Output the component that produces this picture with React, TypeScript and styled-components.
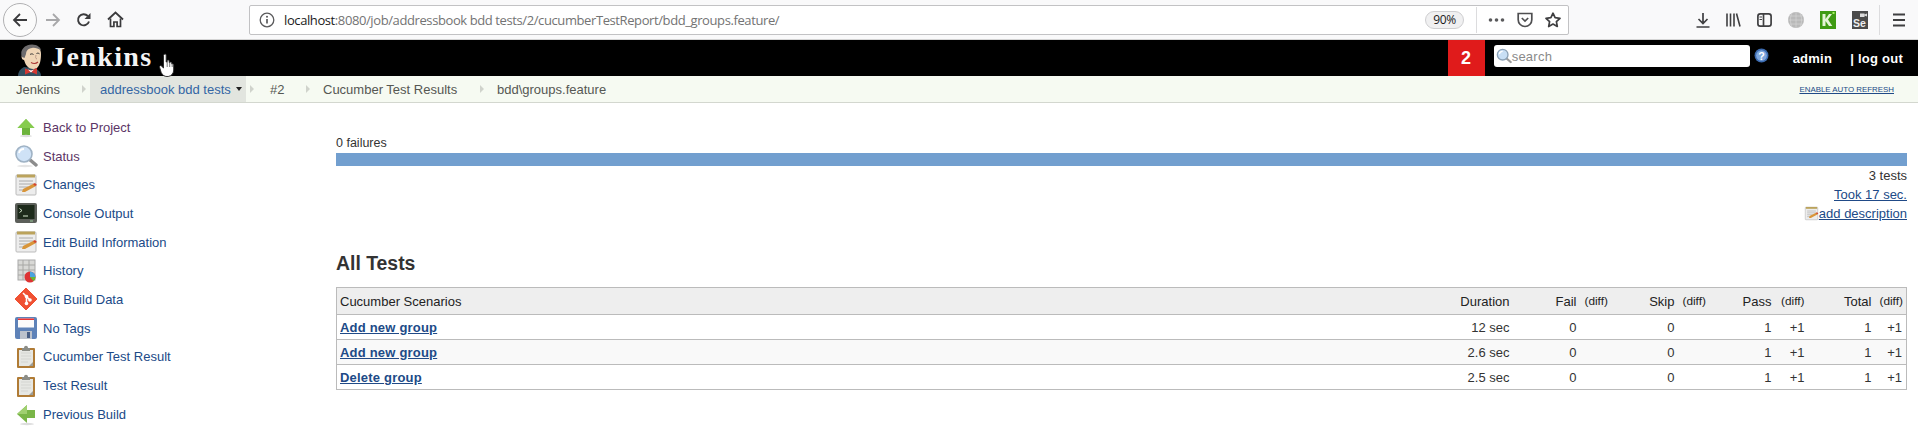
import React from "react";
import styled, { createGlobalStyle } from "styled-components";

const linkBlue = "#204a87";
const visited = "#5c3566";

const GlobalStyle = createGlobalStyle`
    html, body {
        margin: 0;
        padding: 0;
        height: 441px;
        overflow: hidden;
        background: #fff;
        font-family: "Liberation Sans", Arial, sans-serif;
        font-size: 13px;
        color: #333;
    }
    * {
        box-sizing: border-box;
    }
`;

const Page = styled.div`
    position: relative;
    width: 1918px;
    height: 441px;
    overflow: hidden;
`;

/* browser chrome */
const Toolbar = styled.div`
    display: flex;
    align-items: center;
    height: 40px;
    padding-left: 3px;
    background: #f9f9fa;
    border-bottom: 1px solid #d4d4d4;
`;

const BackButton = styled.div`
    display: flex;
    align-items: center;
    justify-content: center;
    flex: none;
    width: 34px;
    height: 34px;
    border: 1px solid #b1b1b3;
    border-radius: 50%;
    background: #fbfbfb;
`;

const NavIcons = styled.div`
    display: flex;
    align-items: center;
    flex: none;
    gap: 15px;
    margin-left: 8px;
    margin-right: 125px;
`;

const UrlBar = styled.div`
    display: flex;
    align-items: center;
    flex: none;
    width: 1320px;
    height: 30px;
    padding: 0 7px 0 9px;
    background: #fff;
    border: 1px solid #c2c2c4;
    border-radius: 2px;
`;

const UrlText = styled.div`
    flex: 1;
    margin-left: 9px;
    font-family: "Open Sans", sans-serif;
    font-size: 13px;
    letter-spacing: -0.4px;
    color: #737373;
    white-space: nowrap;
`;

const UrlHost = styled.span`
    color: #1a1a1a;
`;

const ZoomPill = styled.div`
    width: 39px;
    height: 18px;
    border: 1px solid #cfcfd1;
    border-radius: 9px;
    background: #f0f0f1;
    font-family: "Open Sans", sans-serif;
    font-size: 12px;
    letter-spacing: -0.4px;
    line-height: 16px;
    text-align: center;
    color: #1a1a1a;
`;

const UrlDivider = styled.div`
    width: 1px;
    height: 26px;
    margin: 0 11px 0 12px;
    background: #dcdcde;
`;

const UrlActions = styled.div`
    display: flex;
    align-items: center;
    gap: 12px;
`;

const ToolIcons = styled.div`
    display: flex;
    align-items: center;
    gap: 16px;
    margin-left: 127px;
`;

const ToolDivider = styled.div`
    width: 1px;
    height: 30px;
    margin: 0 13px 0 11px;
    background: #dcdcde;
`;

/* jenkins header */
const Header = styled.div`
    display: flex;
    align-items: stretch;
    height: 36px;
    background: #000;
    color: #fff;
`;

const LogoArea = styled.div`
    display: flex;
    flex: 1;
    align-items: flex-end;
    padding-left: 17px;
`;

const LogoText = styled.div`
    align-self: center;
    margin: -3px 0 0 4px;
    font-family: "Liberation Serif", serif;
    font-size: 28px;
    font-weight: bold;
    letter-spacing: 1.4px;
    color: #f4f4f4;
`;

const Cursor = styled.svg`
    position: absolute;
    left: 159px;
    top: 53px;
`;

const BuildBadge = styled.div`
    display: flex;
    align-items: center;
    justify-content: center;
    width: 37px;
    background: #e01b1b;
    font-size: 18px;
    font-weight: bold;
`;

const SearchBox = styled.div`
    display: flex;
    align-items: center;
    width: 256px;
    height: 22px;
    margin: 5px 4px 0 9px;
    padding-left: 2px;
    background: #fff;
    border-radius: 3px;
    font-size: 13px;
    letter-spacing: 0.25px;
    color: #8a8a8a;
`;

const HelpIcon = styled.svg`
    margin-top: 8px;
`;

const UserLink = styled.div<{ $gap: number }>`
    margin: 11px 0 0 ${(props) => props.$gap}px;
    font-size: 13px;
    font-weight: bold;
    letter-spacing: 0.25px;
    white-space: nowrap;
`;

const HeaderEnd = styled.div`
    width: 15px;
`;

/* breadcrumbs */
const Breadcrumbs = styled.div`
    display: flex;
    align-items: stretch;
    height: 27px;
    background: #f6faf2;
    border-bottom: 1px solid #d3d7cf;
    font-size: 13px;
`;

const Crumb = styled.div<{ $active?: boolean; $width: number; $pad: number }>`
    display: flex;
    align-items: center;
    flex: none;
    width: ${(props) => props.$width}px;
    padding-left: ${(props) => props.$pad}px;
    background: ${(props) => (props.$active ? "#e2e5df" : "transparent")};
    color: ${(props) => (props.$active ? "#3465a4" : "#555753")};
    white-space: nowrap;
`;

const CrumbArrow = styled.span<{ $left?: number; $right?: number }>`
    flex: none;
    width: 0;
    height: 0;
    align-self: center;
    margin-left: ${(props) => props.$left ?? 0}px;
    margin-right: ${(props) => props.$right ?? 0}px;
    border-left: 4px solid #d0d3cc;
    border-top: 4px solid transparent;
    border-bottom: 4px solid transparent;
`;

const DropArrow = styled.span`
    margin-left: 5px;
    width: 0;
    height: 0;
    border-top: 4px solid #222;
    border-left: 3.5px solid transparent;
    border-right: 3.5px solid transparent;
`;

const AutoRefresh = styled.div`
    margin-left: auto;
    padding: 8px 24px 0 0;
    font-size: 7.9px;
    line-height: 11px;
    color: ${linkBlue};
    text-decoration: underline;
    white-space: nowrap;
`;

/* body */
const Body = styled.div`
    display: flex;
    align-items: flex-start;
`;

const Sidebar = styled.nav`
    flex: none;
    width: 336px;
    padding: 10px 0 0 14px;
`;

const SideRow = styled.div<{ $visited?: boolean }>`
    display: flex;
    align-items: center;
    height: 28.7px;
    color: ${(props) => (props.$visited ? visited : linkBlue)};
    font-size: 13px;
    white-space: nowrap;
`;

const SideIcon = styled.svg`
    flex: none;
    margin-right: 5px;
`;

const Main = styled.main`
    flex: none;
    width: 1571px;
    padding-top: 33px;
`;

const FailText = styled.div`
    font-size: 12.5px;
    line-height: 15px;
    color: #333;
`;

const ProgressBar = styled.div`
    height: 13px;
    margin-top: 2px;
    background: #729fcf;
`;

const Summary = styled.div`
    display: flex;
    flex-direction: column;
    align-items: flex-end;
    font-size: 13px;
`;

const SummaryLine = styled.div`
    display: flex;
    align-items: center;
    height: 19px;
`;

const SummaryLink = styled.span`
    color: ${linkBlue};
    text-decoration: underline;
`;

const Heading = styled.h1`
    margin: 25px 0 9px;
    font-size: 19.4px;
    line-height: 30px;
    font-weight: bold;
    color: #333;
`;

const Table = styled.table`
    width: 1571px;
    table-layout: fixed;
    border-collapse: collapse;
    border: 1px solid #bbb;
    font-size: 13px;
`;

const HeadRow = styled.tr`
    height: 27px;
    background: #eee;
    color: #222;
`;

const BodyRow = styled.tr<{ $odd?: boolean }>`
    height: 25px;
    background: ${(props) => (props.$odd ? "#f9f9f9" : "#fff")};
    border-top: 1px solid #bbb;
`;

const Th = styled.th<{ $small?: boolean; $left?: boolean }>`
    padding: 0 ${(props) => (props.$left ? "3px" : "4px")};
    font-weight: normal;
    font-size: ${(props) => (props.$small ? "11.8px" : "13px")};
    text-align: ${(props) => (props.$left ? "left" : "right")};
    white-space: nowrap;
`;

const Td = styled.td`
    padding: 0 4px;
    text-align: right;
    color: #333;
    white-space: nowrap;
`;

const NameCell = styled.td`
    padding: 0 3px;
    text-align: left;
    font-size: 13px;
    font-weight: bold;
    letter-spacing: 0.2px;
    color: ${linkBlue};
    text-decoration: underline;
`;

/* drawn icons */
const ArrowBack = ({ color = "#3b3b3d" }: { color?: string }) => (
    <svg width="16" height="16" viewBox="0 0 16 16" fill="none">
        <path d="M15 8H2M8 2 2 8l6 6" stroke={color} strokeWidth="1.8" />
    </svg>
);

const ArrowForward = () => (
    <svg width="16" height="16" viewBox="0 0 16 16" fill="none">
        <path d="M1 8h13M8 2l6 6-6 6" stroke="#a8a8aa" strokeWidth="1.8" />
    </svg>
);

const Reload = () => (
    <svg width="16" height="16" viewBox="0 0 16 16" fill="none">
        <path d="M13 9.5A5.6 5.6 0 1 1 11.8 4" stroke="#3b3b3d" strokeWidth="1.9" />
        <path d="M14.5 1v6h-6z" fill="#3b3b3d" />
    </svg>
);

const Home = () => (
    <svg width="17" height="17" viewBox="0 0 17 17" fill="none">
        <path d="M1 8.5 8.5 1.5l7.5 7" stroke="#3b3b3d" strokeWidth="1.8" />
        <path d="M3.5 7.5V15.5h3.4V11h3.2v4.5h3.4V7.5" stroke="#3b3b3d" strokeWidth="1.7" />
    </svg>
);

const InfoIcon = () => (
    <svg width="16" height="16" viewBox="0 0 16 16" fill="none">
        <circle cx="8" cy="8" r="6.8" stroke="#5a5a5c" strokeWidth="1.3" />
        <path d="M8 7v4.5" stroke="#5a5a5c" strokeWidth="1.7" />
        <circle cx="8" cy="4.7" r="1" fill="#5a5a5c" />
    </svg>
);

const Dots = () => (
    <svg width="17" height="16" viewBox="0 0 17 16" fill="#5a5a5c">
        <circle cx="2.5" cy="8" r="1.8" />
        <circle cx="8.5" cy="8" r="1.8" />
        <circle cx="14.5" cy="8" r="1.8" />
    </svg>
);

const Pocket = () => (
    <svg width="16" height="16" viewBox="0 0 16 16" fill="none">
        <path d="M1.2 1.5h13.6v6.2a6.8 6.8 0 0 1-13.6 0z" stroke="#4f4f51" strokeWidth="1.7" />
        <path d="M4.8 6 8 9l3.2-3" stroke="#4f4f51" strokeWidth="1.7" />
    </svg>
);

const Star = () => (
    <svg width="16" height="16" viewBox="0 0 16 16" fill="none">
        <path
            d="M8 1.2 10.1 5.7l4.9.6-3.6 3.3.9 4.9L8 12.1l-4.3 2.4.9-4.9L1 6.3l4.9-.6z"
            stroke="#3f3f41"
            strokeWidth="1.7"
            strokeLinejoin="round"
        />
    </svg>
);

const Download = () => (
    <svg width="14" height="16" viewBox="0 0 14 16" fill="none">
        <path d="M7 1v10M2.5 7 7 11.5 11.5 7M0.5 15h13" stroke="#3f3f41" strokeWidth="1.7" />
    </svg>
);

const Library = () => (
    <svg width="15" height="16" viewBox="0 0 15 16" fill="none">
        <path d="M1 1.5v13M4.5 1.5v13M8 1.5v13M10.5 1.5l3.5 13" stroke="#3f3f41" strokeWidth="1.6" />
    </svg>
);

const SidebarToggle = () => (
    <svg width="15" height="16" viewBox="0 0 15 16" fill="none">
        <rect x="0.9" y="1.9" width="13.2" height="12.2" rx="2.4" stroke="#3f3f41" strokeWidth="1.7" />
        <path d="M6.5 2v12" stroke="#3f3f41" strokeWidth="1.7" />
        <path d="M2.5 5h2.5M2.5 7.5h2.5" stroke="#3f3f41" strokeWidth="1.2" />
    </svg>
);

const Globe = () => (
    <svg width="16" height="18" viewBox="0 0 16 18" fill="none">
        <circle cx="8" cy="9" r="8" fill="#b9b9b9" />
        <path d="M0 9h16M1.5 5h13M1.5 13h13M8 1v16M4 2c-2 4-2 10 0 14M12 2c2 4 2 10 0 14" stroke="#d6d6d6" strokeWidth="0.7" />
    </svg>
);

const KatalonIcon = () => (
    <svg width="16" height="18" viewBox="0 0 16 18">
        <rect width="16" height="18" fill="#3f9b13" />
        <path d="M2.5 3h3v5l3.5-5h3l-4 5.5 4.3 6.5H9L5.5 10v5h-3z" fill="#e4f4d5" />
        <rect x="12.5" y="1" width="2" height="2" fill="#a6f060" />
    </svg>
);

const SeleniumIde = () => (
    <svg width="16" height="18" viewBox="0 0 16 18">
        <rect width="16" height="18" fill="#4b4b4b" />
        <path d="M8 2.5h4.5V6H8zM12.5 3.6 15 2.4v3.2l-2.5-1.2z" fill="#ddd" />
        <text x="1" y="15.5" fontFamily="Liberation Sans" fontSize="10.5" fontWeight="bold" fill="#eee">
            Se
        </text>
    </svg>
);

const Hamburger = () => (
    <svg width="12" height="14" viewBox="0 0 12 14" fill="none">
        <path d="M0 1.5h12M0 7h12M0 12.5h12" stroke="#3f3f41" strokeWidth="1.8" />
    </svg>
);

const ButlerLogo = () => (
    <svg width="30" height="32" viewBox="0 0 30 32">
        <path d="M1 32c0-4 2-7 6-9l9 1c5 1 8 4 8 8z" fill="#335061" />
        <path d="M5 11C5 5 9 1 15 1c6 0 9 4 9 9 0 6-1 11-4 14-3 2-8 1-10-2-2-2-2-4-3-6-2 0-3-3-2-5z" fill="#f0d6b7" />
        <path d="M5 13C2 6 8 .5 15 .5c5 0 9 3 9 6-3-2-6-3-9-2.500-4 .5-6 3-6 6L7.500 14z" fill="#6d6b6d" />
        <path d="M13 10.500c1-.8 2.500-.8 3.500 0M19.500 9.500c1-.6 2-.4 3 .3" stroke="#333" strokeWidth="1" fill="none" />
        <path d="M14 18.500c2.500 1.500 5 1.200 7-.5" stroke="#a33" strokeWidth="1.100" fill="none" />
        <path d="M19 11c-.5 2-.8 3.500 1 4" stroke="#b98" strokeWidth="1" fill="none" />
        <path d="M8 24.500l6 2 6-2.500v6.500l-6-2.500-6 2.500z" fill="#d33833" />
        <path d="M11 25.500l3 1 3-1-3 3z" fill="#fff" />
    </svg>
);

const Hand = () => (
    <Cursor width="17" height="24" viewBox="0 0 17 24">
        <path
            d="M5 1.500c1-1 2-.5 2.200.5V9l1-.2V7.500c.8-.8 1.800-.6 2 .3V9.500l.8-.2c.8-.4 1.600-.2 1.800.6V11c.8-.5 1.700-.2 1.900.8V17c0 3-2 6-5.500 6.500-3.500.3-5.500-1-7-4L.5 14c-.3-1 .8-1.700 1.700-1.200L4.500 15V2.500z"
            fill="#fff"
            stroke="#222"
            strokeWidth="0.9"
        />
        <path d="M8.200 9v5M10.700 9.500v4.500M13.200 11v3" stroke="#555" strokeWidth="0.8" />
    </Cursor>
);

const SearchGlass = () => (
    <svg width="16" height="16" viewBox="0 0 24 24">
        <path d="M15 15 22 21" stroke="#9a9a9a" strokeWidth="3.4" strokeLinecap="round" />
        <circle cx="10" cy="10" r="8" fill="#c8dff5" stroke="#8aa0b5" strokeWidth="2" />
        <path d="M5 9c.5-2.500 2.500-4 5-4" stroke="#fff" strokeWidth="2" fill="none" />
    </svg>
);

const sideIcons: Record<string, React.ReactNode> = {
    up: (
        <>
            <path d="M12 4 20.500 13h-4.500v7H8v-7H3.500z" fill="#6cb33b" />
            <path d="M12 4 20.500 13h-17z" fill="#86cc4e" />
            <ellipse cx="12" cy="21" rx="6" ry="1.200" fill="#ddd" />
        </>
    ),
    search: (
        <>
            <path d="M15 15 22 21" stroke="#8c8c8c" strokeWidth="3.400" strokeLinecap="round" />
            <circle cx="10" cy="10" r="8" fill="#cfe2f6" stroke="#9fb2c4" strokeWidth="1.600" />
            <path d="M5 9c.5-2.500 2.500-4 5-4" stroke="#fff" strokeWidth="1.800" fill="none" />
            <ellipse cx="11" cy="22" rx="8" ry="1.200" fill="#e5e5e5" />
        </>
    ),
    notepad: (
        <>
            <rect x="2" y="2" width="20" height="20" rx="1" fill="#ededed" stroke="#bbb" />
            <rect x="3" y="1.500" width="18" height="3" fill="#bba35c" />
            <path d="M5 8h14M5 11h14M5 14h9M5 17h5" stroke="#aaa" />
            <path d="M8 19 9 16 20 10.500l2 2.500-11 6z" fill="#d8953a" />
            <path d="M19 11l2-1 2 2-2 1z" fill="#d3452f" />
        </>
    ),
    terminal: (
        <>
            <rect x="1" y="2" width="22" height="20" rx="2" fill="#5c5f5a" />
            <rect x="3.500" y="4" width="17" height="14" fill="#1d2a1b" />
            <path d="M5.500 7.500 8 9.500 5.500 11.500" stroke="#d7e8cf" fill="none" />
            <path d="M9 15h5" stroke="#d7e8cf" />
            <rect x="16" y="19.500" width="3" height="1" fill="#9c9" />
        </>
    ),
    history: (
        <>
            <rect x="4" y="1" width="17" height="20" fill="#d9d9d6" stroke="#aaa" />
            <path d="M4 6h17M4 11h17M4 16h17M9 1v20M15 1v20" stroke="#a8a8a5" />
            <circle cx="16" cy="18" r="5.500" fill="#d33" />
            <path d="M16 18V12.500a5.500 5.500 0 0 1 5.500 5.500z" fill="#4aa3df" />
            <path d="M16 18h5.500a5.500 5.500 0 0 1-2 4.200z" fill="#6b3" />
        </>
    ),
    git: (
        <>
            <path d="M12 1 23 12 12 23 1 12z" fill="#f05133" stroke="#f05133" strokeWidth="1" strokeLinejoin="round" />
            <path d="M9 6l3.500 3.500v7M12.500 9.500l3.500 3.500" stroke="#fff" strokeWidth="1.600" fill="none" />
            <circle cx="12.500" cy="9.500" r="1.800" fill="#fff" />
            <circle cx="12.500" cy="16.500" r="1.800" fill="#fff" />
            <circle cx="16" cy="13" r="1.800" fill="#fff" />
        </>
    ),
    save: (
        <>
            <rect x="1" y="1" width="22" height="22" rx="2" fill="#5e82b8" />
            <rect x="4" y="2.500" width="16" height="9" fill="#fbfbfb" />
            <rect x="4" y="2.500" width="16" height="1.500" fill="#e33" />
            <rect x="6" y="15" width="12" height="8" fill="#bcc2cc" />
            <rect x="13" y="16" width="3" height="6" fill="#4a5f85" />
        </>
    ),
    clipboard: (
        <>
            <rect x="3" y="3" width="18" height="20" rx="1" fill="#b07b35" />
            <rect x="5" y="5" width="14" height="16" fill="#e6e7e3" />
            <path d="M7 8h10M7 11h10M7 14h10M7 17h7" stroke="#d4d5d1" />
            <path d="M8 3h2c0-3 4-3 4 0h2v3H8z" fill="#8c8d87" />
            <path d="M15 21l4-4v4z" fill="#9d9e99" />
        </>
    ),
    left: (
        <>
            <path d="M3 12 13 3v5h8v8h-8v5z" fill="#7ab648" />
            <path d="M3 12 13 3v9z" fill="#a0d070" />
            <ellipse cx="13" cy="22" rx="7" ry="1.200" fill="#ddd" />
        </>
    ),
};

const sideItems = [
    { label: "Back to Project", icon: "up", visited: true },
    { label: "Status", icon: "search", visited: true },
    { label: "Changes", icon: "notepad" },
    { label: "Console Output", icon: "terminal" },
    { label: "Edit Build Information", icon: "notepad" },
    { label: "History", icon: "history" },
    { label: "Git Build Data", icon: "git" },
    { label: "No Tags", icon: "save" },
    { label: "Cucumber Test Result", icon: "clipboard" },
    { label: "Test Result", icon: "clipboard" },
    { label: "Previous Build", icon: "left" },
];

const columnWidths = [null, 112, 67, 31, 67, 31, 66, 33, 67, 31];

const rows = [
    { name: "Add new group", duration: "12 sec" },
    { name: "Add new group", duration: "2.6 sec" },
    { name: "Delete group", duration: "2.5 sec" },
];

export default function App() {
    return (
        <Page>
            <GlobalStyle />
            <Toolbar>
                <BackButton>
                    <ArrowBack />
                </BackButton>
                <NavIcons>
                    <ArrowForward />
                    <Reload />
                    <Home />
                </NavIcons>
                <UrlBar>
                    <InfoIcon />
                    <UrlText>
                        <UrlHost>localhost</UrlHost>:8080/job/addressbook bdd tests/2/cucumberTestReport/bdd_groups.feature/
                    </UrlText>
                    <ZoomPill>90%</ZoomPill>
                    <UrlDivider />
                    <UrlActions>
                        <Dots />
                        <Pocket />
                        <Star />
                    </UrlActions>
                </UrlBar>
                <ToolIcons>
                    <Download />
                    <Library />
                    <SidebarToggle />
                    <Globe />
                    <KatalonIcon />
                    <SeleniumIde />
                </ToolIcons>
                <ToolDivider />
                <Hamburger />
            </Toolbar>
            <Header>
                <LogoArea>
                    <ButlerLogo />
                    <LogoText>Jenkins</LogoText>
                </LogoArea>
                <BuildBadge>2</BuildBadge>
                <SearchBox>
                    <SearchGlass />
                    search
                </SearchBox>
                <HelpIcon width="15" height="15" viewBox="0 0 14 14">
                    <circle cx="7" cy="7" r="6.500" fill="#3c6bb0" />
                    <circle cx="7" cy="7" r="5" fill="#7ea6dc" />
                    <text x="4" y="11" fontFamily="Liberation Sans" fontSize="10" fontWeight="bold" fill="#fff">
                        ?
                    </text>
                </HelpIcon>
                <UserLink $gap={24}>admin</UserLink>
                <UserLink $gap={18}>| log out</UserLink>
                <HeaderEnd />
            </Header>
            <Hand />
            <Breadcrumbs>
                <Crumb $width={82} $pad={16}>
                    Jenkins
                </Crumb>
                <CrumbArrow $right={4} />
                <Crumb $active $width={156} $pad={10}>
                    addressbook bdd tests
                    <DropArrow />
                </Crumb>
                <CrumbArrow $left={4} />
                <Crumb $width={52} $pad={16}>
                    #2
                </Crumb>
                <CrumbArrow />
                <Crumb $width={170} $pad={13}>
                    Cucumber Test Results
                </Crumb>
                <CrumbArrow />
                <Crumb $width={200} $pad={13}>
                    bdd\groups.feature
                </Crumb>
                <AutoRefresh>ENABLE AUTO REFRESH</AutoRefresh>
            </Breadcrumbs>
            <Body>
                <Sidebar>
                    {sideItems.map((item) => (
                        <SideRow key={item.label} $visited={item.visited}>
                            <SideIcon width="24" height="24" viewBox="0 0 24 24">
                                {sideIcons[item.icon]}
                            </SideIcon>
                            {item.label}
                        </SideRow>
                    ))}
                </Sidebar>
                <Main>
                    <FailText>0 failures</FailText>
                    <ProgressBar />
                    <Summary>
                        <SummaryLine>3 tests</SummaryLine>
                        <SummaryLine>
                            <SummaryLink>Took 17 sec.</SummaryLink>
                        </SummaryLine>
                        <SummaryLine>
                            <svg width="15" height="15" viewBox="0 0 24 24">
                                {sideIcons.notepad}
                            </svg>
                            <SummaryLink>add description</SummaryLink>
                        </SummaryLine>
                    </Summary>
                    <Heading>All Tests</Heading>
                    <Table>
                        <colgroup>
                            {columnWidths.map((w, i) => (
                                <col key={i} width={w ?? undefined} />
                            ))}
                        </colgroup>
                        <thead>
                            <HeadRow>
                                <Th $left>Cucumber Scenarios</Th>
                                <Th>Duration</Th>
                                <Th>Fail</Th>
                                <Th $small>(diff)</Th>
                                <Th>Skip</Th>
                                <Th $small>(diff)</Th>
                                <Th>Pass</Th>
                                <Th $small>(diff)</Th>
                                <Th>Total</Th>
                                <Th $small>(diff)</Th>
                            </HeadRow>
                        </thead>
                        <tbody>
                            {rows.map((row, i) => (
                                <BodyRow key={i} $odd={i === 1}>
                                    <NameCell>{row.name}</NameCell>
                                    <Td>{row.duration}</Td>
                                    <Td>0</Td>
                                    <Td />
                                    <Td>0</Td>
                                    <Td />
                                    <Td>1</Td>
                                    <Td>+1</Td>
                                    <Td>1</Td>
                                    <Td>+1</Td>
                                </BodyRow>
                            ))}
                        </tbody>
                    </Table>
                </Main>
            </Body>
        </Page>
    );
}
